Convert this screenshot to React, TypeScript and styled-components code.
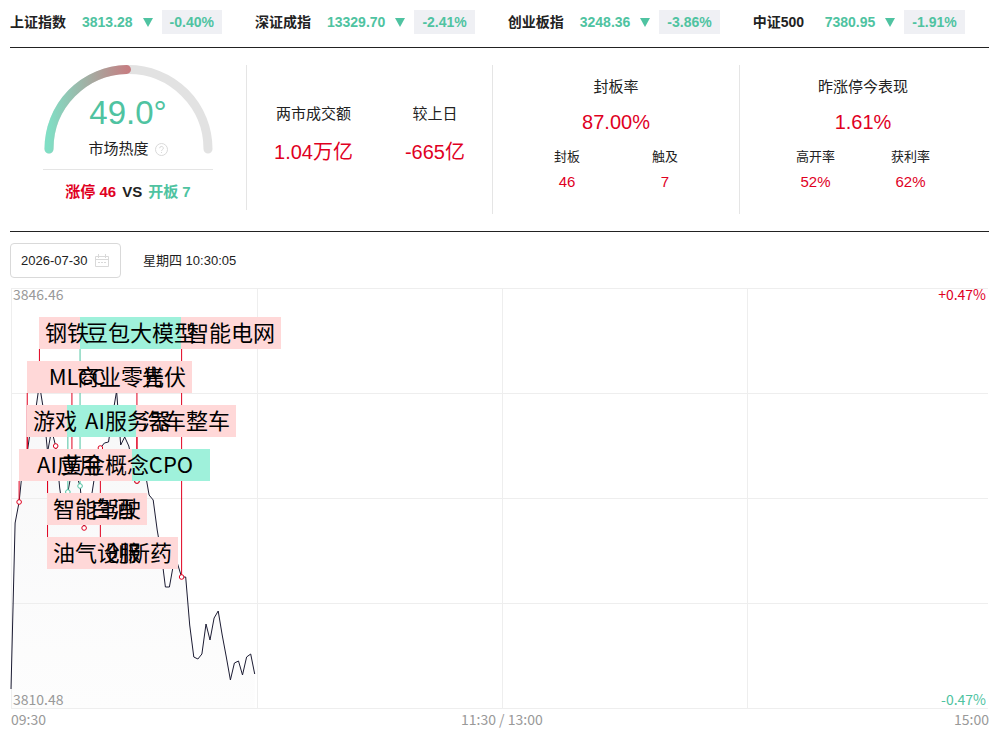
import React, { useLayoutEffect, useRef, useState } from 'react';
import styled, { createGlobalStyle } from 'styled-components';

const RED = '#e0001f';
const GREEN = '#4fc3a1';
const INK = '#222';
const RULE = '#e5e5e5';
const CJK = '"Noto Sans CJK SC", sans-serif';

const GlobalStyle = createGlobalStyle`
  * { box-sizing: border-box; }
  body {
    margin: 0;
    background: #fff;
    color: ${INK};
    font-family: "Liberation Sans", ${CJK};
    font-size: 14px;
    line-height: 20px;
  }
`;

const Page = styled.main`
  padding: 0 18px 0 10px;
`;

const IndexBar = styled.header`
  display: flex;
  gap: 33px;
  height: 48px;
  padding-top: 10px;
  border-bottom: 1px solid ${INK};
`;

const IndexItem = styled.div`
  display: flex;
  align-items: center;
  height: 24px;
  font-weight: bold;
  white-space: nowrap;
  color: ${GREEN};
`;

const IndexName = styled.span`
  min-width: 57px;
  margin-right: 15px;
  color: ${INK};
`;

const DownMark = styled.svg`
  width: 10px;
  height: 9px;
  margin: 0 9px 0 10px;
  fill: ${GREEN};
`;

const Change = styled.span`
  padding: 0 8px;
  background: #eff0f4;
  line-height: 24px;
`;

const Summary = styled.section`
  display: grid;
  grid-template-columns: 237fr 246fr 247fr 246fr;
  height: 184px;
  padding: 17px 3px 17px 0;
  border-bottom: 1px solid ${INK};
`;

const Panel = styled.div<{ $last?: boolean }>`
  display: flex;
  flex-direction: column;
  align-items: center;
  border-right: ${(p) => (p.$last ? 'none' : `1px solid ${RULE}`)};
`;

const HeatPanel = styled(Panel)`
  height: 145px;
`;

const Gauge = styled.svg`
  display: block;
  width: 170px;
  height: 90px;
`;

const HeatBody = styled.div`
  display: flex;
  flex-direction: column;
  align-items: center;
  width: 170px;
  margin-top: -60px;
  padding-bottom: 10px;
  border-bottom: 1px solid ${RULE};
`;

const HeatValue = styled.strong`
  font-size: 33px;
  font-weight: normal;
  line-height: 36px;
  color: ${GREEN};
`;

const HeatLabel = styled.span`
  display: flex;
  align-items: center;
  gap: 6px;
  margin-top: 8px;
  font-size: 15px;
`;

const HelpIcon = styled.svg`
  width: 13px;
  height: 13px;
  fill: none;
  stroke: #d9d9d9;
`;

const Versus = styled.p`
  display: flex;
  gap: 6px;
  margin: 12px 0 0;
  font-size: 15px;
  font-weight: bold;
`;

const Tone = styled.span<{ $color: string }>`
  color: ${(p) => p.$color};
`;

const TurnoverRow = styled.dl`
  display: flex;
  justify-content: center;
  gap: 52px;
  margin: 39px 0 0;
`;

const Stat = styled.div`
  display: flex;
  flex-direction: column;
  align-items: center;
`;

const StatLabel = styled.dt`
  font-size: 15px;
`;

const StatValue = styled.dd<{ $gap: number }>`
  margin: ${(p) => p.$gap}px 0 0;
  font-size: 20px;
  color: ${RED};
`;

const RateHead = styled.dl`
  margin: 12px 0 0;
`;

const RateRow = styled.dl<{ $gap: number }>`
  display: flex;
  gap: ${(p) => p.$gap}px;
  margin: 15px 0 0;
`;

const SmallLabel = styled.dt`
  font-size: 13px;
`;

const SmallValue = styled.dd`
  margin: 5px 0 0;
  font-size: 15px;
  color: ${RED};
`;

const DateRow = styled.div`
  display: flex;
  align-items: center;
  gap: 22px;
  margin-top: 11px;
  font-size: 13px;
`;

const DateField = styled.label`
  display: flex;
  align-items: center;
  width: 111px;
  height: 35px;
  padding: 0 11px 0 10px;
  border: 1px solid #d9d9d9;
  border-radius: 4px;
`;

const DateInput = styled.input`
  flex: 1;
  min-width: 0;
  padding: 0;
  border: 0;
  outline: 0;
  background: none;
  color: ${INK};
  font: inherit;
`;

const CalendarIcon = styled.svg`
  width: 14px;
  height: 14px;
  fill: none;
  stroke: #d9d9d9;
`;

const ChartBox = styled.section`
  margin-top: 10px;
`;

const ChartSvg = styled.svg`
  display: block;
  width: 100%;
  height: 421px;
  overflow: visible;
  font-family: ${CJK};
`;

const TimeAxis = styled.div`
  display: grid;
  grid-template-columns: 121fr auto 120fr;
  padding: 0 0 0 1px;
  color: #999;
  font-family: ${CJK};
  font-size: 14px;

  > :last-child { text-align: right; }
`;

const INDICES = [
  { name: '上证指数', value: '3813.28', change: '-0.40%' },
  { name: '深证成指', value: '13329.70', change: '-2.41%' },
  { name: '创业板指', value: '3248.36', change: '-3.86%' },
  { name: '中证500', value: '7380.95', change: '-1.91%' },
];

// One value per minute from 09:30, measured down from the top of the plot.
const TREND = [
  401, 235, 214, 174, 165, 135, 124, 96, 122, 164, 142, 158, 200, 228, 204,
  182, 186, 198, 240, 222, 204, 177, 160, 155, 154, 127, 103, 157, 149, 158,
  177, 193, 182, 184, 207, 212, 242, 266, 299, 299, 276, 276, 289, 289, 337,
  369, 371, 366, 336, 352, 330, 323, 347, 369, 392, 375, 373, 387, 369, 366, 386,
];

type Tag = { text: string; minute: number; anchor?: number; row: number; up: boolean };

const TAGS: Tag[] = [
  { text: 'AI应用', minute: 2, row: 3, up: true },
  { text: '游戏', minute: 4, row: 2, up: true },
  { text: 'MLCC', minute: 4, row: 1, up: true },
  { text: '钢铁', minute: 7, row: 0, up: true },
  { text: '智能驾驶', minute: 9, row: 4, up: true },
  { text: '油气设服', minute: 9, row: 5, up: true },
  { text: '黄金概念', minute: 11, row: 3, up: true },
  { text: 'AI服务器', minute: 14, row: 2, up: false },
  { text: '商业零售', minute: 15, row: 1, up: true },
  { text: '豆包大模型', minute: 17, row: 0, up: false },
  { text: '白酒', minute: 18, row: 4, up: true },
  { text: '创新药', minute: 22, row: 5, up: true },
  { text: 'CPO', minute: 30, anchor: 31, row: 3, up: false },
  { text: '汽车整车', minute: 31, row: 2, up: true },
  { text: '光伏', minute: 31, row: 1, up: true },
  { text: '智能电网', minute: 42, row: 0, up: true },
];

const PLOT_HEIGHT = 420;
const SESSION_MINUTES = 241;

function MinuteChart() {
  const ref = useRef<SVGSVGElement>(null);
  const [width, setWidth] = useState(960);

  useLayoutEffect(() => {
    const node = ref.current;
    if (!node) return;
    const measure = () => setWidth(node.getBoundingClientRect().width);
    measure();
    const observer = new ResizeObserver(measure);
    observer.observe(node);
    return () => observer.disconnect();
  }, []);

  const x = (minute: number) => 1 + (minute * width) / SESSION_MINUTES;
  const line = TREND.map((y, i) => `${x(i).toFixed(1)},${y}`).join(' ');
  const tagLeft = (minute: number) => Math.floor(x(minute));
  const tagTop = (row: number) => 29 + row * 44;
  const tagWidth = (text: string) => text.length * 22 + 12;

  return (
    <ChartSvg ref={ref} role="img" aria-label="上证指数分时走势">
      <defs>
        <linearGradient id="area" x1="0" y1="0" x2="0" y2="1">
          <stop offset="0" stopColor="#f7f7f8" />
          <stop offset="1" stopColor="#fdfdfd" />
        </linearGradient>
      </defs>
      <polygon points={`${x(0)},${PLOT_HEIGHT} ${line} ${x(60)},${PLOT_HEIGHT}`} fill="url(#area)" />
      <g stroke="#eee" shapeRendering="crispEdges">
        {[0, 1, 2, 3, 4].map((k) => (
          <line key={k} x1="1" x2={width - 1} y1={k * 105 + 0.5} y2={k * 105 + 0.5} />
        ))}
        {[0, 60.6, 120.9, 181.3].map((m) => (
          <line key={m} x1={Math.floor(x(m)) + 0.5} x2={Math.floor(x(m)) + 0.5} y1="0" y2={PLOT_HEIGHT} />
        ))}
      </g>
      <g fontSize="14" fill="#999">
        <text x="3" y="12">3846.46</text>
        <text x="3" y="417">3810.48</text>
        <text x={width - 3} y="12" textAnchor="end" fill={RED}>+0.47%</text>
        <text x={width - 3} y="417" textAnchor="end" fill={GREEN}>-0.47%</text>
      </g>
      <polyline points={line} fill="none" stroke="#1c1c33" strokeWidth="1" />
      {TAGS.map((t) => {
        const minute = t.anchor ?? t.minute;
        const color = t.up ? RED : GREEN;
        return (
          <g key={t.text} stroke={color}>
            <line
              x1={x(minute)}
              x2={x(minute)}
              y1={Math.min(tagTop(t.row) + 32, TREND[minute])}
              y2={Math.max(tagTop(t.row), TREND[minute] - 2)}
            />
            <circle cx={x(minute)} cy={TREND[minute]} r="2.3" fill="#fff" />
          </g>
        );
      })}
      {TAGS.map((t) => (
        <rect
          key={t.text}
          x={tagLeft(t.minute)}
          y={tagTop(t.row)}
          width={tagWidth(t.text)}
          height="32"
          fill={t.up ? '#ffd8d8' : '#9ff1db'}
        />
      ))}
      <g fontSize="22" fill="#000" textAnchor="middle">
        {TAGS.map((t) => (
          <text key={t.text} x={tagLeft(t.minute) + tagWidth(t.text) / 2} y={tagTop(t.row) + 24}>
            {t.text}
          </text>
        ))}
      </g>
    </ChartSvg>
  );
}

function HeatGauge() {
  return (
    <Gauge viewBox="0 0 170 90" aria-hidden="true">
      <defs>
        <linearGradient id="heat" gradientUnits="userSpaceOnUse" x1="5" y1="0" x2="88" y2="0">
          <stop offset="0" stopColor="#80dfc5" />
          <stop offset="1" stopColor="#c87a7f" />
        </linearGradient>
      </defs>
      <g fill="none" strokeWidth="9" strokeLinecap="round">
        <path d="M6 84A79.5 79.5 0 0 1 165 84" stroke="#e2e2e2" />
        <path d="M6 84A79.5 79.5 0 0 1 83.5 4.5" stroke="url(#heat)" />
      </g>
    </Gauge>
  );
}

type Pair = [string, string];

function RatePanel({ title, value, items, gap, last }: {
  title: string; value: string; items: Pair[]; gap: number; last?: boolean;
}) {
  return (
    <Panel $last={last}>
      <RateHead>
        <Stat>
          <StatLabel>{title}</StatLabel>
          <StatValue $gap={15}>{value}</StatValue>
        </Stat>
      </RateHead>
      <RateRow $gap={gap}>
        {items.map(([label, v]) => (
          <Stat key={label}>
            <SmallLabel>{label}</SmallLabel>
            <SmallValue>{v}</SmallValue>
          </Stat>
        ))}
      </RateRow>
    </Panel>
  );
}

export default function App() {
  const [date, setDate] = useState('2026-07-30');

  return (
    <Page>
      <GlobalStyle />
      <IndexBar>
        {INDICES.map((item) => (
          <IndexItem key={item.name}>
            <IndexName>{item.name}</IndexName>
            <span>{item.value}</span>
            <DownMark viewBox="0 0 10 9" aria-hidden="true">
              <path d="M0 0h10L5 9z" />
            </DownMark>
            <Change>{item.change}</Change>
          </IndexItem>
        ))}
      </IndexBar>

      <Summary>
        <HeatPanel>
          <HeatGauge />
          <HeatBody>
            <HeatValue>49.0°</HeatValue>
            <HeatLabel>
              市场热度
              <HelpIcon viewBox="0 0 13 13" aria-hidden="true">
                <circle cx="6.5" cy="6.5" r="6" />
                <path d="M4.7 5.2a1.8 1.8 0 1 1 2.6 1.6q-.8.4-.8 1.2M6.5 9v1" />
              </HelpIcon>
            </HeatLabel>
          </HeatBody>
          <Versus>
            <Tone $color={RED}>涨停 46</Tone>
            <span>VS</span>
            <Tone $color={GREEN}>开板 7</Tone>
          </Versus>
        </HeatPanel>
        <Panel>
          <TurnoverRow>
            <Stat>
              <StatLabel>两市成交额</StatLabel>
              <StatValue $gap={18}>1.04万亿</StatValue>
            </Stat>
            <Stat>
              <StatLabel>较上日</StatLabel>
              <StatValue $gap={18}>-665亿</StatValue>
            </Stat>
          </TurnoverRow>
        </Panel>
        <RatePanel title="封板率" value="87.00%" items={[['封板', '46'], ['触及', '7']]} gap={72} />
        <RatePanel title="昨涨停今表现" value="1.61%" items={[['高开率', '52%'], ['获利率', '62%']]} gap={56} last />
      </Summary>

      <DateRow>
        <DateField>
          <DateInput aria-label="日期" value={date} onChange={(e) => setDate(e.target.value)} />
          <CalendarIcon viewBox="0 0 14 14" aria-hidden="true">
            <path d="M.5 2.5h13v10H.5zM.5 5.5h13M3.5 0v4M10.5 0v4M3 8.5h2M6 8.5h2M9 8.5h2" />
          </CalendarIcon>
        </DateField>
        <time>星期四 10:30:05</time>
      </DateRow>

      <ChartBox>
        <MinuteChart />
        <TimeAxis>
          <span>09:30</span>
          <span>11:30 / 13:00</span>
          <span>15:00</span>
        </TimeAxis>
      </ChartBox>
    </Page>
  );
}
